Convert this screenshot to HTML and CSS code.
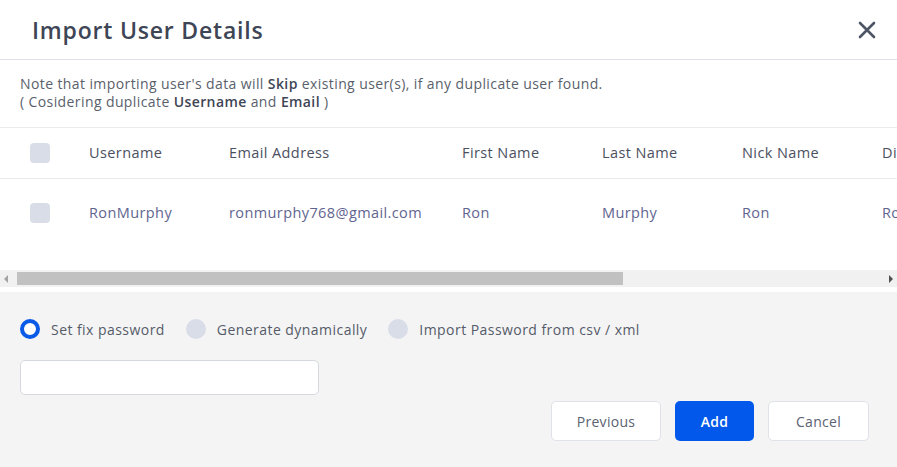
FILE: index.html
```html
<!DOCTYPE html>
<html lang="en">
<head>
    <meta charset="UTF-8">
    <meta name="viewport" content="width=device-width, initial-scale=1.0">
    <title>Import User Details</title>
    <link rel="stylesheet" href="styles.css">
</head>
<body>
<div class="modal">
    <div class="modal-header">
        <h2>Import User Details</h2>
        <button class="close-btn" aria-label="Close">
            <svg width="20" height="20" viewBox="0 0 20 20">
                <path d="M3 3 L17 17 M17 3 L3 17" stroke="#4d5565" stroke-width="2.6" stroke-linecap="round"/>
            </svg>
        </button>
    </div>

    <div class="note">
        Note that importing user's data will <b>Skip</b> existing user(s), if any duplicate user found.<br>
        ( Cosidering duplicate <b>Username</b> and <b>Email</b> )
    </div>

    <div class="table-wrap">
        <div class="table-scroll">
            <table class="users">
                <thead>
                <tr>
                    <th class="col-check"><span class="checkbox"></span></th>
                    <th class="col-user">Username</th>
                    <th class="col-email">Email Address</th>
                    <th>First Name</th>
                    <th>Last Name</th>
                    <th>Nick Name</th>
                    <th>Display Name</th>
                    <th>Password</th>
                    <th>Role</th>
                </tr>
                </thead>
                <tbody>
                <tr>
                    <td class="col-check"><span class="checkbox"></span></td>
                    <td>RonMurphy</td>
                    <td>ronmurphy768@gmail.com</td>
                    <td>Ron</td>
                    <td>Murphy</td>
                    <td>Ron</td>
                    <td>Ron Murphy</td>
                    <td>-</td>
                    <td>Subscriber</td>
                </tr>
                </tbody>
            </table>
        </div>
        <!-- scrollbar drawn by hand so it shows in headless mode -->
        <div class="hscroll">
            <span class="arrow arrow-left"></span>
            <div class="track"><div class="thumb"></div></div>
            <span class="arrow arrow-right"></span>
        </div>
    </div>

    <div class="modal-footer">
        <div class="radio-row">
            <label class="radio"><span class="dot checked"></span>Set fix password</label>
            <label class="radio"><span class="dot"></span>Generate dynamically</label>
            <label class="radio"><span class="dot"></span>Import Password from csv / xml</label>
        </div>
        <input class="pass-input" type="text">
        <div class="actions">
            <button class="btn btn-light btn-prev">Previous</button>
            <button class="btn btn-primary">Add</button>
            <button class="btn btn-light btn-cancel">Cancel</button>
        </div>
    </div>
</div>
</body>
</html>
```

FILE: styles.css
```css
body {
  margin: 0;
  font-family: "Open Sans", "Noto Sans", sans-serif;
  background-color: #ffffff;
  color: #4b5060;
}

.modal {
  width: 897px;
  height: 467px;
  display: flex;
  flex-direction: column;
  overflow: hidden;
}

/* Header */
.modal-header {
  height: 59px;
  border-bottom: 1px solid #dfe2e8;
  display: flex;
  align-items: center;
  justify-content: space-between;
  padding: 0 20px 0 32px;
}

.modal-header h2 {
  margin: 0;
  font-size: 23px;
  font-weight: 600;
  color: #3e4555;
  letter-spacing: 0.8px;
}

.close-btn {
  background: none;
  border: none;
  padding: 0;
  width: 20px;
  height: 20px;
  cursor: pointer;
}

.note {
  padding: 15px 20px 0 20px;
  height: 52px;
  font-size: 14px;
  line-height: 18px;
  letter-spacing: 0.4px;
  color: #5a5f6b;
}

.note b {
  font-weight: 600;
  color: #3e4555;
}

/* Table */
.table-wrap {
  border-top: 1px solid #ececec;
  height: 164px;
  position: relative;
}

.table-scroll {
  overflow: hidden;
  height: 142px;
}

.users {
  border-collapse: collapse;
  width: 1283px;
  table-layout: fixed;
  font-size: 14.5px;
  letter-spacing: 0.4px;
}

.users th,
.users td {
  text-align: left;
  padding: 0;
  white-space: nowrap;
  width: 140px;
}

.users th {
  font-weight: 400;
  color: #4b5060;
  height: 49px;
  padding-bottom: 1px;
  border-bottom: 1px solid #ececec;
}

.users td {
  color: #5f6590;
  height: 67px;
}

.users .col-check {
  width: 59px;
  padding-left: 30px;
}

.users .col-email {
  width: 233px;
}

.checkbox {
  display: block;
  width: 20px;
  height: 20px;
  border-radius: 4px;
  background-color: #d8dde8;
}

.hscroll {
  position: absolute;
  left: 0;
  right: 0;
  bottom: 5px;
  height: 17px;
  background-color: #f1f1f1;
  display: flex;
  align-items: center;
}

.track {
  flex: 1;
  height: 17px;
  position: relative;
}

.thumb {
  position: absolute;
  left: 5px;
  top: 2px;
  width: 606px;
  height: 13px;
  background-color: #c1c1c1;
}

.arrow {
  width: 12px;
  height: 17px;
  display: flex;
  align-items: center;
  justify-content: center;
}

.arrow::before {
  content: "";
  border-top: 4px solid transparent;
  border-bottom: 4px solid transparent;
}

.arrow-left::before {
  border-right: 4px solid #a3a3a3;
}

.arrow-right::before {
  border-left: 4px solid #505050;
}

/* Footer */
.modal-footer {
  flex: 1;
  background-color: #f4f4f4;
  padding: 27px 28px 0 20px;
}

.radio-row {
  display: flex;
  align-items: center;
  gap: 21px;
  font-size: 14px;
  letter-spacing: 0.45px;
  color: #555b69;
}

.radio {
  display: flex;
  align-items: center;
  gap: 11px;
}

.dot {
  width: 20px;
  height: 20px;
  border-radius: 50%;
  background-color: #d8dde8;
  box-sizing: border-box;
}

.dot.checked {
  background-color: #ffffff;
  border: 4px solid #0a5ae8;
}

.pass-input {
  display: block;
  margin-top: 21px;
  width: 299px;
  height: 35px;
  box-sizing: border-box;
  border: 1px solid #d5d8e0;
  border-radius: 5px;
  background-color: #ffffff;
}

.actions {
  display: flex;
  justify-content: flex-end;
  gap: 14px;
  margin-top: 6px;
}

.btn {
  height: 40px;
  border-radius: 5px;
  font-family: inherit;
  font-size: 14px;
  font-weight: 500;
  letter-spacing: 0.3px;
  cursor: pointer;
}

.btn-light {
  background-color: #ffffff;
  border: 1px solid #dfe2e8;
  color: #5b6272;
}

.btn-prev {
  width: 110px;
}

.btn-cancel {
  width: 101px;
}

.btn-primary {
  width: 79px;
  background-color: #0158eb;
  border: none;
  color: #ffffff;
  font-weight: 600;
}
```
